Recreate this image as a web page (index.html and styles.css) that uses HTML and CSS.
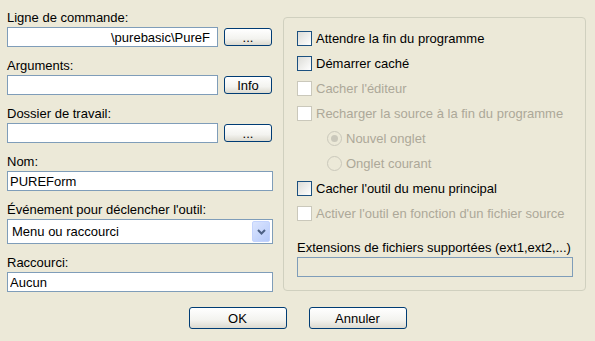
FILE: index.html
```html
<!DOCTYPE html>
<html lang="fr">
<head>
<meta charset="utf-8">
<title>Outil</title>
<link rel="stylesheet" href="styles.css">
</head>
<body>
<div class="dialog">
 <div class="main">
  <div class="left">
   <div class="field">
    <label>Ligne de commande:</label>
    <div class="row">
     <input class="edit wide right" type="text" value="\purebasic\PureF">
     <button class="btn small">...</button>
    </div>
   </div>
   <div class="field">
    <label>Arguments:</label>
    <div class="row">
     <input class="edit wide" type="text" value="">
     <button class="btn small">Info</button>
    </div>
   </div>
   <div class="field">
    <label>Dossier de travail:</label>
    <div class="row">
     <input class="edit wide" type="text" value="">
     <button class="btn small">...</button>
    </div>
   </div>
   <div class="field">
    <label>Nom:</label>
    <input class="edit full" type="text" value="PUREForm">
   </div>
   <div class="field">
    <label>Événement pour déclencher l'outil:</label>
    <div class="combo">
     <span>Menu ou raccourci</span>
     <span class="drop">
      <svg width="9" height="6" viewBox="0 0 9 6"><path d="M1 1 L4.5 4.5 L8 1" fill="none" stroke="#4d6185" stroke-width="2"/></svg>
     </span>
    </div>
   </div>
   <div class="field">
    <label>Raccourci:</label>
    <input class="edit full" type="text" value="Aucun">
   </div>
  </div>

  <div class="group">
   <div class="check"><span class="box"></span>Attendre la fin du programme</div>
   <div class="check"><span class="box"></span>Démarrer caché</div>
   <div class="check off"><span class="box"></span>Cacher l'éditeur</div>
   <div class="check off"><span class="box"></span>Recharger la source à la fin du programme</div>
   <div class="check off radio"><span class="dot on"></span>Nouvel onglet</div>
   <div class="check off radio"><span class="dot"></span>Onglet courant</div>
   <div class="check"><span class="box"></span>Cacher l'outil du menu principal</div>
   <div class="check off"><span class="box"></span>Activer l'outil en fonction d'un fichier source</div>
   <div class="ext">
    <label>Extensions de fichiers supportées (ext1,ext2,...)</label>
    <input class="edit ro" type="text" value="" disabled>
   </div>
  </div>
 </div>

 <div class="buttons">
  <button class="btn big">OK</button>
  <button class="btn big">Annuler</button>
 </div>
</div>
</body>
</html>
```

FILE: styles.css
```css
body{
 margin:0;
 background:#ece9d8;
 font-family:"Liberation Sans", Arial, sans-serif;
 font-size:13px;
 color:#000;
}
.dialog{
 padding:10px 0 0 7px;
}
.main{
 display:flex;
 gap:10px;
}
.left{
 width:266px;
 display:flex;
 flex-direction:column;
 gap:11px;
}
.field{
 display:flex;
 flex-direction:column;
 gap:2px;
}
label{
 display:block;
 line-height:15px;
}
.row{
 display:flex;
 align-items:center;
 gap:6px;
}
.edit{
 box-sizing:border-box;
 height:20px;
 margin:0;
 border:1px solid #7f9db9;
 background:#fff;
 font:inherit;
 color:#000;
 padding:0 3px 0 2px;
 outline:none;
}
.wide{ width:211px; }
.full{ width:266px; }
.right{
 text-align:right;
 padding-right:7px;
}
.combo{
 box-sizing:border-box;
 width:266px;
 height:25px;
 border:1px solid #7f9db9;
 background:#fff;
 display:flex;
 align-items:center;
 justify-content:space-between;
 padding:0 2px 0 4px;
}
.drop{
 width:18px;
 height:21px;
 box-sizing:border-box;
 border:1px solid #c3d3fd;
 border-radius:2px;
 background:linear-gradient(135deg,#dbe5fe,#b6cafa);
 display:flex;
 align-items:center;
 justify-content:center;
}
.btn{
 box-sizing:border-box;
 margin:0;
 border:1px solid #003c74;
 border-radius:3px;
 background:linear-gradient(#ffffff,#f3f3ef 60%,#dcdad0);
 font:inherit;
 color:#000;
 padding:0;
}
.small{
 width:48px;
 height:18px;
 line-height:15px;
}
.big{
 width:98px;
 height:22px;
}
.group{
 box-sizing:border-box;
 width:303px;
 height:274px;
 margin-top:7px;
 border:1px solid #d0d0bf;
 border-radius:4px;
 padding:13px 13px 0 13px;
 display:flex;
 flex-direction:column;
 gap:10px;
}
.check{
 display:flex;
 align-items:center;
 height:15px;
 line-height:15px;
 white-space:nowrap;
}
.check.off{ color:#aca899; }
.box{
 box-sizing:border-box;
 width:15px;
 height:15px;
 margin-right:4px;
 border:1px solid #1c5180;
 background:linear-gradient(135deg,#dcdcd7,#ffffff);
}
.off .box{
 border-color:#cac8bb;
 background:#fff;
}
.radio{ padding-left:30px; }
.dot{
 box-sizing:border-box;
 width:15px;
 height:15px;
 margin-right:4px;
 border:1px solid #cac8bb;
 border-radius:50%;
 display:flex;
 align-items:center;
 justify-content:center;
}
.dot.on::after{
 content:"";
 width:7px;
 height:7px;
 border-radius:50%;
 background:#cac8bb;
}
.ext{
 margin-top:9px;
 display:flex;
 flex-direction:column;
 gap:2px;
}
.ro{
 width:276px;
 background:#ece9d8;
}
.buttons{
 display:flex;
 justify-content:center;
 gap:22px;
 margin:15px 7px 0 0;
}
```
